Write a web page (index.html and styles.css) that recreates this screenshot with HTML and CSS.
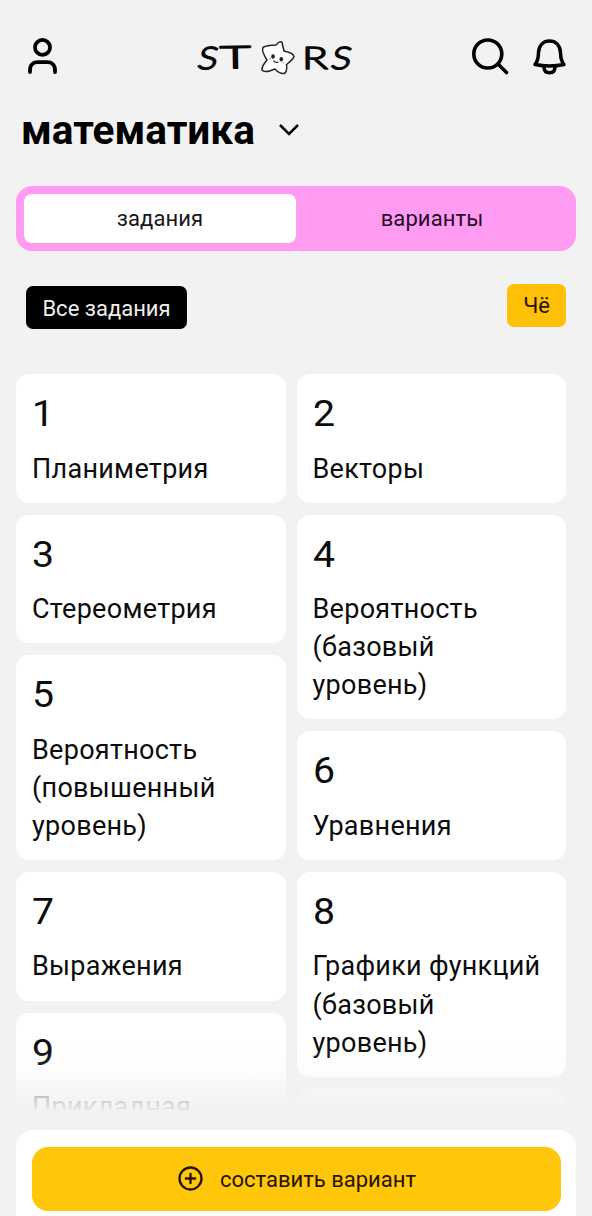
FILE: index.html
```html
<!DOCTYPE html>
<html lang="ru">
<head>
<meta charset="utf-8">
<title>Математика</title>
<link rel="stylesheet" href="styles.css">
</head>
<body>
<div class="app">
  <header class="header">
    <svg class="icon-user" width="36" height="42" viewBox="0 0 36 42" fill="none" stroke="#000" stroke-width="3.8" stroke-linecap="round"><circle cx="17.500" cy="11.400" r="7.500"/><path d="M5 36V34c0-5.200 3.400-7.800 7.800-7.800h9.400c4.400 0 7.800 2.600 7.800 7.800v2"/></svg>
    <svg class="logo" width="170" height="50" viewBox="0 0 170 50">
      <g class="logo-text">
        <text transform="translate(6 35.500) skewX(-12)" textLength="20" lengthAdjust="spacingAndGlyphs">S</text>
        <text transform="translate(30 35.500) rotate(-1)" textLength="31" lengthAdjust="spacingAndGlyphs">T</text>
        <text transform="translate(112 36)" textLength="26" lengthAdjust="spacingAndGlyphs">R</text>
        <text transform="translate(139.500 35.500) skewX(-12)" textLength="20" lengthAdjust="spacingAndGlyphs">S</text>
      </g>
      <path d="M85.500 12.600Q90 7.500 91.500 10L93.500 18.500Q103 20.500 103.500 24Q102.500 27 96 32Q97 40 93.500 41Q89 41.500 84.500 36.500Q74 41 71.500 37.500Q71 34 76.500 27.500Q70.500 18 72.500 15Q76 12.800 85.500 12.600Z" transform="translate(.5 -.5)" fill="#fff" stroke="#222" stroke-width="1.500" stroke-linejoin="round"/>
      <g fill="#222"><ellipse cx="83" cy="23.500" rx="1.800" ry="2.200"/><ellipse cx="91.300" cy="26.300" rx="1.800" ry="2.300"/></g>
      <path d="M83.500 27.500q1.500 3 5 1.500" fill="none" stroke="#222" stroke-width="1.200"/>
      <path d="M79.500 25.500l1.500.6M92.500 29.500l1.500.4" stroke="#888"/>
    </svg>
    <div class="header-actions">
      <svg width="42" height="42" viewBox="0 0 42 42" fill="none" stroke="#000" stroke-width="3.600" stroke-linecap="round"><circle cx="15.800" cy="17" r="14"/><path d="M26 27l8.500 8.500"/></svg>
      <svg width="36" height="42" viewBox="0 0 36 42" fill="none" stroke="#000" stroke-width="3.500" stroke-linejoin="round"><path d="M3 27.500c3.500-4 3.200-7.500 3.500-12C7 8 11.500 4 17.500 4S28 8 28.500 15.500c.3 4.500 0 8 3.500 12q-14.500 3-29 0z"/><path d="M12 30c0 4 2.200 5.800 5.500 5.800s5.500-1.800 5.500-5.800"/></svg>
    </div>
  </header>

  <h1 class="subject"><span>математика</span><svg width="22" height="14" viewBox="0 0 22 14" fill="none" stroke="#000" stroke-width="2.500"><path d="M2 2l9 9 9-9"/></svg></h1>

  <nav class="tabs">
    <button class="tab tab-active">задания</button>
    <button class="tab">варианты</button>
  </nav>

  <div class="filters">
    <button class="chip chip-dark">Все задания</button>
    <button class="chip chip-yellow">Чё</button>
  </div>

  <main class="tasks">
    <div class="column">
      <article class="card"><div class="num">1</div><div class="name">Планиметрия</div></article>
      <article class="card"><div class="num">3</div><div class="name">Стереометрия</div></article>
      <article class="card"><div class="num">5</div><div class="name">Вероятность<br>(повышенный<br>уровень)</div></article>
      <article class="card"><div class="num">7</div><div class="name">Выражения</div></article>
      <article class="card"><div class="num">9</div><div class="name">Прикладная</div></article>
    </div>
    <div class="column">
      <article class="card"><div class="num">2</div><div class="name">Векторы</div></article>
      <article class="card"><div class="num">4</div><div class="name">Вероятность<br>(базовый<br>уровень)</div></article>
      <article class="card"><div class="num">6</div><div class="name">Уравнения</div></article>
      <article class="card"><div class="num">8</div><div class="name">Графики функций<br>(базовый<br>уровень)</div></article>
      <article class="card card-empty"></article>
    </div>
  </main>

  <footer class="footer">
    <button class="compose">
      <svg width="26" height="26" viewBox="0 0 26 26" fill="none" stroke="#241400" stroke-width="2.300" stroke-linecap="round"><circle cx="13.500" cy="12.500" r="11"/><path d="M13.500 7.800v9.400M8.800 12.500h9.400"/></svg>
      <span>составить вариант</span>
    </button>
  </footer>
</div>
</body>
</html>
```

FILE: styles.css
```css
* { box-sizing: border-box; }
body { margin: 0; background: #f2f2f2; color: #0c0c0c; font-family: Roboto, "Noto Sans", sans-serif; }
button { border: 0; margin: 0; padding: 0; font: inherit; color: inherit; background: none; }
svg { display: block; flex: none; }

.app { height: 1216px; display: flex; flex-direction: column; overflow: hidden; }

.header { height: 106px; padding: 33px 24px 0; display: flex; align-items: flex-start; flex: none; }
.icon-user { margin: 3px 0 0 1px; }
.logo { margin: 0 auto 0 129px; }
.logo-text { font: 300 31px Lato, sans-serif; fill: #080808; stroke: #080808; stroke-width: 1.500px; stroke-linejoin: round; }
.header-actions { display: flex; gap: 18px; margin-top: 4px; }

.subject { display: flex; align-items: center; gap: 23px; height: 48px; margin: 0; padding-left: 21px; font-size: 40.600px; font-weight: 700; color: #000; flex: none; }

.tabs { display: flex; height: 65px; margin: 32px 16px 0; padding: 8px; border-radius: 16px; background: #ff9bf0; flex: none; }
.tab { flex: 1; border-radius: 8px; font-size: 22px; letter-spacing: .1px; color: #250b2c; }
.tab-active { background: #fff; color: #181818; }

.filters { display: flex; justify-content: space-between; align-items: flex-start; height: 123px; padding: 33px 26px 0; flex: none; }
.chip { height: 43px; border-radius: 7px; font-size: 22px; }
.chip-dark { margin-top: 2px; padding-top: 2px; width: 161px; background: #000; color: #eee; }
.chip-yellow { width: 59px; background: #ffc107; color: #241600; }

.tasks { position: relative; display: flex; gap: 11px; height: 736px; padding: 0 26px 0 16px; overflow: hidden; flex: none; }
.tasks::after { content: ""; position: absolute; inset: auto 0 0; height: 66px; background: linear-gradient(#f2f2f200, #f2f2f226 40%, #f2f2f2c4 75%, #f2f2f2f2); }
.column { flex: 1; display: flex; flex-direction: column; gap: 12px; }
.card { flex: none; padding: 16px; border-radius: 13px; background: #fff; }
.card-empty { height: 129px; }
.num { height: 59.500px; line-height: 48px; font-size: 37px; transform: scaleX(1.06); transform-origin: left; }
.name { font-size: 27px; line-height: 38.100px; margin-bottom: -1px; letter-spacing: .28px; white-space: nowrap; }

.footer { flex: 1; margin: 20px 16px 0; padding: 17px 15px 0 16px; border-radius: 16px 16px 0 0; background: #fff; }
.compose { display: flex; align-items: center; justify-content: center; gap: 17px; width: 100%; height: 64px; border-radius: 16px; background: #ffc60a; color: #241400; font-size: 22px; }
```
